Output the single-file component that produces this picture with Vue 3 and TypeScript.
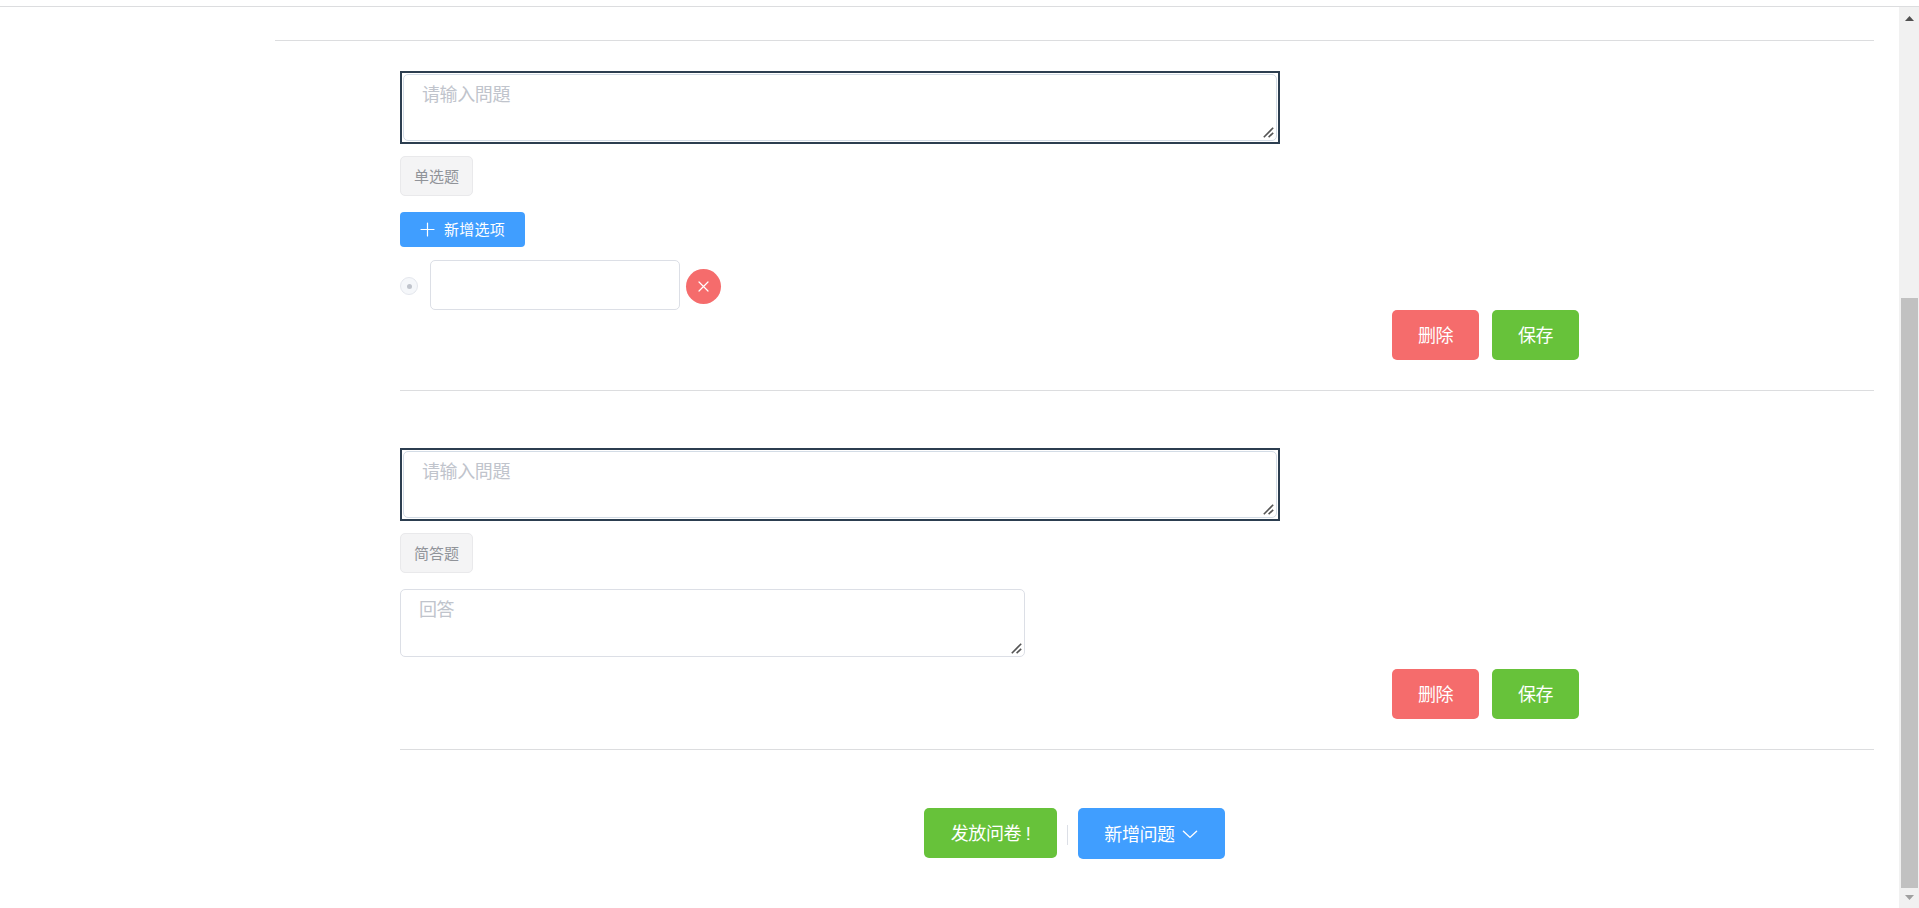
<!-- QuestionnaireEdit.vue -->
<script setup lang="ts">
import { ref } from 'vue'

type QuestionType = 'radio' | 'text'

interface OptionItem {
  id: number
  label: string
}

interface Question {
  id: number
  type: QuestionType
  title: string
  options: OptionItem[]
  answer: string
}

// 题型名称
const typeNames: Record<QuestionType, string> = {
  radio: '单选题',
  text: '简答题',
}

const questions = ref<Question[]>([
  { id: 1, type: 'radio', title: '', options: [{ id: 1, label: '' }], answer: '' },
  { id: 2, type: 'text', title: '', options: [], answer: '' },
])

const nextId = ref(3)

const handleAddOption = (question: Question) => {
  question.options.push({ id: nextId.value++, label: '' })
}
const handleRemoveOption = (question: Question, id: number) => {
  question.options = question.options.filter((o) => o.id !== id)
}
const handleDelete = (id: number) => {
  questions.value = questions.value.filter((q) => q.id !== id)
}
const handleSave = (question: Question) => {
  console.log('保存:', question)
}
const handlePublish = () => {
  console.log('发放问卷')
}
const handleAddQuestion = () => {
  questions.value.push({ id: nextId.value++, type: 'text', title: '', options: [], answer: '' })
}
</script>

<template>
  <div class="page">
    <!-- 顶部栏 -->
    <header class="topbar"></header>

    <div class="body">
      <main class="content">
        <hr class="line line-wide" />

        <!-- 问题列表 -->
        <section v-for="q in questions" :key="q.id" class="question">
          <div class="title-box">
            <textarea v-model="q.title" class="title-input" placeholder="请输入問題"></textarea>
            <svg class="grip grip-title" viewBox="0 0 11 11" width="11" height="11">
              <path d="M0.8 10.2L10.2 0.8M5.6 10.2L10.2 5.8" />
            </svg>
          </div>
          <div class="type-tag">{{ typeNames[q.type] }}</div>

          <template v-if="q.type === 'radio'">
            <button class="btn btn-small btn-primary" @click="handleAddOption(q)">
              <svg class="icon-plus" viewBox="0 0 15 15" width="15" height="15">
                <path d="M7.5 1V14M1 7.5H14" />
              </svg>
              <span>新增选项</span>
            </button>
            <div v-for="o in q.options" :key="o.id" class="option-row">
              <span class="radio"></span>
              <input v-model="o.label" class="option-input" type="text" />
              <button class="btn-circle" @click="handleRemoveOption(q, o.id)">
                <svg class="icon-close" viewBox="0 0 11 11" width="11" height="11">
                  <path d="M1 1L10 10M10 1L1 10" />
                </svg>
              </button>
            </div>
          </template>

          <div v-else class="answer-box">
            <textarea v-model="q.answer" class="answer-input" placeholder="回答"></textarea>
            <svg class="grip grip-answer" viewBox="0 0 11 11" width="11" height="11">
              <path d="M0.8 10.2L10.2 0.8M5.6 10.2L10.2 5.8" />
            </svg>
          </div>

          <div class="actions">
            <button class="btn btn-danger" @click="handleDelete(q.id)">删除</button>
            <button class="btn btn-success" @click="handleSave(q)">保存</button>
          </div>
          <hr class="line" />
        </section>

        <!-- 底部操作 -->
        <footer class="footer">
          <button class="btn btn-success btn-publish" @click="handlePublish">发放问卷 !</button>
          <span class="divider"></span>
          <button class="btn btn-primary btn-dropdown" @click="handleAddQuestion">
            <span>新增问题</span>
            <svg class="icon-arrow" viewBox="0 0 18 18" width="18" height="18">
              <path d="M2.4 5.2L9 11.4L15.6 5.2" />
            </svg>
          </button>
        </footer>
      </main>

      <!-- 滚动条 -->
      <aside class="scrollbar">
        <svg viewBox="0 0 9 5" width="9" height="5"><path d="M0 5L4.5 0L9 5Z" fill="#505050" /></svg>
        <div class="thumb"></div>
        <svg viewBox="0 0 9 5" width="9" height="5"><path d="M0 0L4.5 5L9 0Z" fill="#a0a0a0" /></svg>
      </aside>
    </div>
  </div>
</template>

<style>
body {
  margin: 0;
  background: #fff;
  overflow: hidden;
}
</style>

<style scoped>
.page {
  display: flex;
  flex-direction: column;
  height: 100vh;
  font-family: 'Liberation Sans', 'Noto Sans CJK SC', sans-serif;
  font-size: 18px;
  letter-spacing: -0.4px;
  color: #2c3e50;
  background: #fff;
}
.page * {
  box-sizing: border-box;
}
.topbar {
  flex: none;
  height: 7px;
  border-bottom: 1px solid #dcdddf;
}
.body {
  display: flex;
  flex: 1;
  min-height: 0;
}
.content {
  flex: 1;
  padding: 33px 25px 0 275px;
}
.line {
  height: 1px;
  margin: 0;
  border: none;
  background: #dcdddf;
}
.line-wide {
  margin-bottom: 30px;
}

/* 问题 */
.question {
  display: flex;
  flex-direction: column;
  align-items: flex-start;
  margin-left: 125px;
  margin-bottom: 57px;
}
.question .line {
  width: 100%;
}
.title-box {
  position: relative;
  width: 880px;
  height: 73px;
  padding: 1px;
  border: 2px solid #2c3e50;
}
.title-input,
.answer-input {
  display: block;
  width: 100%;
  height: 100%;
  margin: 0;
  padding: 7px 18px 5px;
  border: 1px solid #d3dce6;
  border-radius: 5px;
  outline: none;
  resize: none;
  font: inherit;
  letter-spacing: inherit;
  line-height: 26px;
  color: #606266;
  background: #fff;
}
.answer-input {
  border-color: #dcdfe6;
}
.title-input::placeholder,
.answer-input::placeholder {
  color: #c0c4cc;
}
.grip {
  position: absolute;
  fill: none;
  stroke: #555;
  stroke-width: 1.6;
}
.grip-title {
  right: 4px;
  bottom: 4px;
}
.grip-answer {
  right: 3px;
  bottom: 3px;
}
.type-tag {
  display: flex;
  align-items: center;
  justify-content: center;
  width: 73px;
  height: 40px;
  margin: 12px 0 16px;
  padding-bottom: 2px;
  border: 1px solid #e9e9eb;
  border-radius: 5px;
  background: #f4f4f5;
  color: #909399;
  font-size: 15px;
  letter-spacing: 0;
}
.option-row {
  display: flex;
  align-items: center;
  margin-top: 13px;
}
.radio {
  display: flex;
  align-items: center;
  justify-content: center;
  width: 18px;
  height: 18px;
  margin: 2px 12px 0 0;
  border: 1px solid #e4e7ed;
  border-radius: 50%;
  background: #f5f7fa;
}
.radio::after {
  content: '';
  width: 5px;
  height: 5px;
  border-radius: 50%;
  background: #c0c4cc;
}
.option-input {
  width: 250px;
  height: 50px;
  padding: 0 19px;
  border: 1px solid #dcdfe6;
  border-radius: 5px;
  outline: none;
  font: inherit;
  color: #606266;
}
.answer-box {
  position: relative;
  width: 625px;
  height: 68px;
  margin-bottom: 12px;
}

/* 按钮 */
.btn {
  display: flex;
  align-items: center;
  justify-content: center;
  width: 87px;
  height: 50px;
  padding: 2px 0 0;
  border: none;
  border-radius: 5px;
  font: inherit;
  letter-spacing: inherit;
  line-height: 1;
  color: #fff;
  white-space: pre;
  cursor: pointer;
}
.btn-primary {
  background: #409eff;
}
.btn-success {
  background: #67c23a;
}
.btn-danger {
  background: #f56c6c;
}
.btn-small {
  width: 125px;
  height: 35px;
  padding: 0;
  gap: 9px;
  border-radius: 4px;
  font-size: 15px;
  letter-spacing: 0.2px;
}
.btn-circle {
  display: flex;
  align-items: center;
  justify-content: center;
  width: 35px;
  height: 35px;
  margin: 3px 0 0 6px;
  padding: 0;
  border: none;
  border-radius: 50%;
  background: #f56c6c;
  cursor: pointer;
}
.icon-plus,
.icon-close,
.icon-arrow {
  fill: none;
  stroke: #fff;
  stroke-width: 1.2;
  stroke-linecap: round;
}
.icon-arrow {
  stroke-width: 1.4;
}
.actions {
  display: flex;
  gap: 13px;
  margin-left: 992px;
  margin-bottom: 30px;
}

/* 底部 */
.footer {
  display: flex;
  align-items: flex-start;
  margin: 58px 0 0 649px;
}
.btn-publish {
  width: 133px;
}
.btn-dropdown {
  width: 147px;
  height: 51px;
  gap: 6px;
}
.divider {
  width: 1px;
  height: 20px;
  margin: 17px 10px 0;
  background: #dcdfe6;
}

/* 滚动条 */
.scrollbar {
  display: flex;
  flex-direction: column;
  align-items: center;
  justify-content: space-between;
  width: 20px;
  padding: 9px 0 8px;
  background: #f1f1f1;
}
.thumb {
  width: 17px;
  height: 590px;
  margin: auto 0 7px;
  background: #c1c1c1;
}
</style>
